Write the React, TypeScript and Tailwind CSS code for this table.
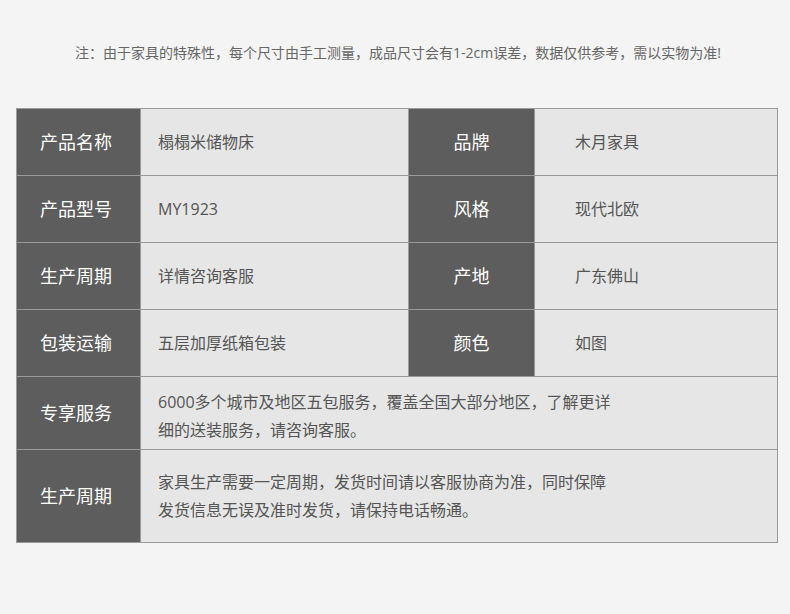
import React from "react";

const font = { fontFamily: '"Open Sans", "Noto Sans CJK SC", sans-serif' };

function Label({ children, pr = "pr-[5px]" }: { children: React.ReactNode; pr?: string }) {
  return (
    <div className={`bg-[#5d5d5d] text-white text-[18px] flex items-center justify-center ${pr}`}>
      {children}
    </div>
  );
}

function Value({ children, pl = "pl-[17px]" }: { children: React.ReactNode; pl?: string }) {
  return (
    <div className={`bg-[#e6e6e6] text-[#555] text-[16px] flex items-center ${pl}`}>
      {children}
    </div>
  );
}

export default function App() {
  return (
    <div className="w-[790px] h-[614px] bg-[#f4f4f4] pt-[43px]" style={font}>
      <div className="text-center text-[14px] text-[#666] leading-[20px] pl-[6px]">
        注：由于家具的特殊性，每个尺寸由手工测量，成品尺寸会有1-2cm误差，数据仅供参考，需以实物为准!
      </div>
      <div className="ml-[16px] mt-[45px] w-[762px] bg-[#9a9a9a] p-px gap-px grid grid-cols-[123px_267px_125px_1fr] grid-rows-[66px_66px_66px_66px_72px_92px]">
        <Label>产品名称</Label>
        <Value>榻榻米储物床</Value>
        <Label pr="pr-0">品牌</Label>
        <Value pl="pl-[40px]">木月家具</Value>

        <Label>产品型号</Label>
        <Value>MY1923</Value>
        <Label pr="pr-0">风格</Label>
        <Value pl="pl-[40px]">现代北欧</Value>

        <Label>生产周期</Label>
        <Value>详情咨询客服</Value>
        <Label pr="pr-0">产地</Label>
        <Value pl="pl-[40px]">广东佛山</Value>

        <Label>包装运输</Label>
        <Value>五层加厚纸箱包装</Value>
        <Label pr="pr-0">颜色</Label>
        <Value pl="pl-[40px]">如图</Value>

        <Label>专享服务</Label>
        <div className="col-span-3 bg-[#e6e6e6] text-[#555] text-[16px] leading-[28px] flex items-center pl-[17px] pt-[6px]">
          <div>
            6000多个城市及地区五包服务，覆盖全国大部分地区，了解更详
            <br />
            细的送装服务，请咨询客服。
          </div>
        </div>

        <Label>生产周期</Label>
        <div className="col-span-3 bg-[#e6e6e6] text-[#555] text-[16px] leading-[28px] flex items-center pl-[17px]">
          <div>
            家具生产需要一定周期，发货时间请以客服协商为准，同时保障
            <br />
            发货信息无误及准时发货，请保持电话畅通。
          </div>
        </div>
      </div>
    </div>
  );
}
